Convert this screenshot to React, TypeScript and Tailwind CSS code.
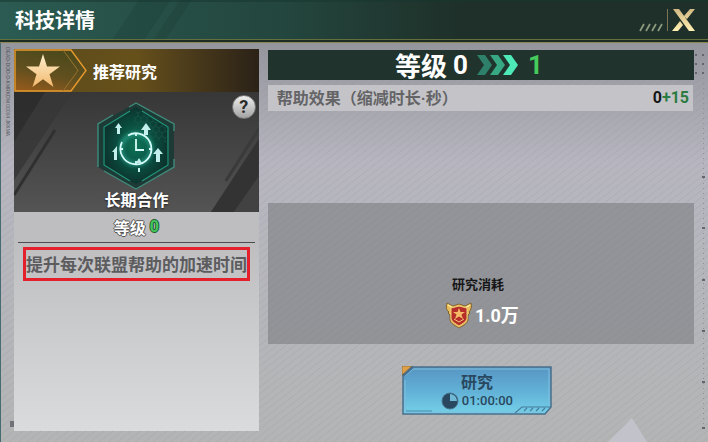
const chevrons = ["#2f806a", "#38a884", "#4deab8"];

function StarBadge() {
  return (
    <svg className="w-[74px] h-[43px] shrink-0" viewBox="0 0 74 43">
      <defs>
        <linearGradient id="badge" x1="0" y1="1" x2="0.4" y2="0">
          <stop offset="0" stopColor="#9a5b1b" />
          <stop offset="0.5" stopColor="#63501f" />
          <stop offset="1" stopColor="#4d4a1c" />
        </linearGradient>
        <linearGradient id="star" x1="0" y1="0" x2="0" y2="1">
          <stop offset="0" stopColor="#fff0cf" />
          <stop offset="1" stopColor="#f2b86d" />
        </linearGradient>
      </defs>
      <path d="M1 1H57L72 21.500L57 42H1Z" fill="url(#badge)" stroke="#e79a2c" strokeWidth="1.400" />
      <path d="M49 1L64 21.500L49 42" fill="none" stroke="#96702c" />
      <path d="M53 6L64 21.500L53 37" fill="none" stroke="#8a6a28" strokeWidth="0.700" />
      <path
        d="M29 5L33 17.500H46L35.500 25.200L39.500 38L29 30.200L18.500 38L22.500 25.200L12 17.500H25Z"
        fill="url(#star)"
      />
    </svg>
  );
}

function TechIcon() {
  return (
    <svg className="w-20 h-[90px]" viewBox="0 0 80 90">
      <defs>
        <radialGradient id="hex">
          <stop offset="0" stopColor="#0e7558" />
          <stop offset="0.600" stopColor="#0a4c3f" />
          <stop offset="1" stopColor="#0c332e" />
        </radialGradient>
        <pattern id="cells" width="6" height="10" patternUnits="userSpaceOnUse">
          <path d="M3 0L6 2V5L3 7L0 5V2ZM3 7V10" fill="none" stroke="#1b5a4b" strokeWidth="0.600" />
        </pattern>
        <filter id="glow" x="-20%" y="-20%" width="140%" height="140%">
          <feGaussianBlur stdDeviation="2" />
        </filter>
      </defs>
      <path d="M40 2L78 23V66L40 88L2 66V23Z" fill="#1d3a36" />
      <path d="M40 6L73 26V64L40 83L7 64V26Z" fill="url(#hex)" />
      <path d="M40 8L71 26V42L36 30Z" fill="url(#cells)" />
      <path d="M33 6L40 2L78 23V30M78 58V66L40 88L8 70M2 66V23L17 14" fill="none" stroke="#3f8a79" strokeWidth="1.400" />
      <path d="M34 10L8 26V64L34 80M46 80L72 64V26L46 10" fill="none" stroke="#23967a" strokeWidth="1.200" />
      <circle cx="40" cy="48" r="15" fill="none" stroke="#3ecbb0" strokeWidth="3" opacity="0.7" filter="url(#glow)" />
      <g fill="none" stroke="#d5fcf8" strokeWidth="1.800">
        <path d="M32 34.500A15.500 15.500 0 1 1 26 41" />
        <path d="M40 38V49H48M40 32V35M53 48H56M24 48H27M40 60V63" />
      </g>
      <g fill="#c3efed">
        <path d="M22.500 22L26 27H24V33H21V27H19Z" />
        <path d="M50 22L55 29H52V34H48V29H45Z" />
        <path d="M21 45V59H18V51H16Z" />
        <path d="M62 47L67 53H64V61H60V53H57Z" />
        <path d="M43 57L46 62H40ZM42 67H44V71H42Z" />
      </g>
    </svg>
  );
}

function MedalIcon() {
  return (
    <svg className="w-7 h-7" viewBox="0 0 28 28">
      <path
        d="M2 2L8 5L14 3L20 5L26 2C27 6 26 9 24 11L25 12L23 14V19C22 23 17 25 14 27C11 25 6 23 5 19V14L3 12L4 11C1 9 1 6 2 2Z"
        fill="#e9bd59"
        stroke="#745222"
        strokeWidth="0.800"
      />
      <path d="M3 4L8 7L7 10M25 4L20 7L21 10" fill="none" stroke="#fff0a8" strokeWidth="1.200" />
      <path d="M14 5L22 7V18C21 21 17 23 14 25C11 23 7 21 6 18V7Z" fill="#b62e29" stroke="#efd07a" />
      <path d="M14 7L15.500 11H20L16.500 13.500L18 18L14 15.500L10 18L11.500 13.500L8 11H12.500Z" fill="#f4ba66" />
      <path d="M9 18L14 21L19 18" fill="none" stroke="#f1c875" />
    </svg>
  );
}

function Header() {
  return (
    <header className="relative h-[43px] shrink-0 flex items-start justify-between pl-[15px] pr-3 bg-gradient-to-r from-[#2b5b52] via-[#23463e] via-40% to-[#1e3029] to-65%">
      <svg className="absolute inset-0 w-full h-full" preserveAspectRatio="none" viewBox="0 0 708 43">
        <path d="M139 0H171L145 39H113ZM180 0H192L166 39H154Z" fill="#10251f" opacity="0.15" />
        <path d="M0 1H708" stroke="#16372f" />
        <path d="M0 39.500H708" stroke="#64703c" />
        <path d="M0 41H708" stroke="#1c2d28" strokeWidth="2" />
        <path d="M0 42.500H708" stroke="#8c874f" />
      </svg>
      <h1 className="relative mt-1.5 text-xl leading-7 font-bold text-white">科技详情</h1>
      <div className="relative flex items-center h-10">
        <svg className="w-6 h-10" viewBox="0 0 24 40">
          <path d="M1 31L5 24M7 31L11 24M13 31L17 24M19 31L23 24" stroke="#8b987f" strokeWidth="1.800" />
        </svg>
        <span className="ml-1 w-px h-[22px] bg-[#7c7455]" />
        <button aria-label="关闭" className="ml-1 w-6 h-6 cursor-pointer">
          <svg viewBox="0 0 24 24">
            <defs>
              <linearGradient id="gold" x1="0" y1="0" x2="0" y2="1">
                <stop offset="0" stopColor="#d0b783" />
                <stop offset="1" stopColor="#fff0b2" />
              </linearGradient>
            </defs>
            <path d="M1 1H7L23 23H17ZM18 1H23L15 11L12 8ZM8 13L11 17L6 23H0Z" fill="url(#gold)" />
          </svg>
        </button>
      </div>
    </header>
  );
}

function TechPanel() {
  return (
    <section className="w-[36%] shrink-0 flex flex-col bg-gradient-to-b from-[#bebec0] from-50% to-[#dadbdd]">
      <div className="flex items-center bg-gradient-to-r from-[#5c4b1c] via-[#66501a] to-[#2b2217]">
        <StarBadge />
        <h2 className="ml-[5px] text-base font-bold text-white">推荐研究</h2>
      </div>

      <div className="relative h-[120px] flex flex-col items-center pt-[9px] bg-gradient-to-b from-[#373737] to-[#545455]">
        <svg className="absolute inset-0 w-full h-full" preserveAspectRatio="none" viewBox="0 0 245 120">
          <path d="M0 0H58L0 88Z" fill="#292929" opacity="0.75" />
          <path d="M31 0H58L0 88V50Z" fill="#414141" opacity="0.5" />
          <path d="M41 38L0 103" stroke="#303031" strokeWidth="3" />
          <path d="M245 37L212 89" stroke="#3a3a3b" strokeWidth="3" />
          <path d="M245 47V120H197Z" fill="#333334" />
          <path d="M245 84V120H220Z" fill="#424243" />
        </svg>
        <button
          aria-label="帮助"
          className="absolute right-[3px] top-[3px] w-6 h-6 rounded-full border border-[#777] bg-gradient-to-b from-[#eeeeee] to-[#a3a3a3] font-[Roboto] text-lg leading-5 font-bold text-[#2b2b2b] cursor-pointer"
        >
          ?
        </button>
        <div className="relative">
          <TechIcon />
        </div>
        <h3 className="relative -mt-1 text-base leading-6 font-bold text-white [text-shadow:0_1px_2px_#222]">
          长期合作
        </h3>
      </div>

      <div className="mx-1 h-[31px] flex justify-center items-center gap-1 border-b border-[#4c4c50] text-base font-bold text-white">
        <span className="[text-shadow:1px_0_#555,-1px_0_#555,0_1px_#555,0_-1px_#555]">等级</span>
        <span className="font-[Roboto] text-[#42c65b] [text-shadow:1px_0_#245c30,-1px_0_#245c30,0_1px_#245c30,0_-1px_#245c30]">
          0
        </span>
      </div>

      <p className="mx-[9px] mt-1 border-[3px] border-[#e3202b] text-center text-[17px] leading-7 font-bold text-[#5c5c5f] whitespace-nowrap">
        提升每次联盟帮助的加速时间
      </p>
    </section>
  );
}

function ResearchPanel() {
  return (
    <section className="flex-1 min-w-0 flex flex-col pt-px">
      <div className="h-[30px] pr-6 flex items-center justify-center gap-[9px] bg-[#20332d] text-[26px] leading-[30px] font-bold text-white">
        <span className="flex items-center gap-1.5">
          等级
          <span className="font-[Roboto]">0</span>
        </span>
        <svg className="w-[42px] h-5" viewBox="0 0 42 20">
          {chevrons.map((color, i) => (
            <path key={color} d="M0 0H8L15 10L8 20H0L7 10Z" fill={color} transform={`translate(${i * 13} 0)`} />
          ))}
        </svg>
        <span className="font-[Roboto] text-[#45ca5d]">1</span>
      </div>

      <div className="mt-[5px] mr-px h-[26px] flex items-center justify-between pl-[9px] pr-1 bg-[#c4c4c8]">
        <span className="text-base font-bold text-[#646467]">
          帮助效果（缩减时长<span className="font-[Roboto]">·</span>秒）
        </span>
        <span className="font-[Roboto] text-base font-bold text-[#171719]">
          0<span className="text-[#2c7b42]">+15</span>
        </span>
      </div>

      <div className="mt-[92px] h-[141px] flex flex-col items-center justify-end pb-3 pr-1.5 bg-[#707176]/50">
        <span className="text-[13px] leading-5 font-bold text-[#161617]">研究消耗</span>
        <div className="mt-1 flex items-center pl-2 text-white">
          <MedalIcon />
          <span className="ml-0.5 text-lg leading-8 font-bold">
            <span className="font-[Roboto]">1.0</span>万
          </span>
        </div>
      </div>

      <button className="relative self-center mt-[22px] mr-2 w-[150px] h-[49px] flex flex-col items-center pt-[5px] text-[#294860] cursor-pointer">
        <svg className="absolute inset-0 w-full h-full" viewBox="0 0 150 49">
          <defs>
            <linearGradient id="btn" x1="0" y1="0" x2="0" y2="1">
              <stop offset="0" stopColor="#5795c3" />
              <stop offset="0.500" stopColor="#61b0d6" />
              <stop offset="1" stopColor="#75d1e9" />
            </linearGradient>
          </defs>
          <path d="M1 1H149V41L143 48H1Z" fill="url(#btn)" stroke="#496f8d" strokeWidth="1.500" />
          <path d="M3 10L11 3H147V39M140 46H3V14" fill="none" stroke="#80bedb" />
          <path d="M1 10L11 1" stroke="#446b88" strokeWidth="2" />
          <path d="M0 0H10L0 9Z" fill="#e1a044" stroke="#785d3f" strokeWidth="0.700" />
          <path d="M113 47L120 41H148M122 45L125 42M128 45L131 42M134 45L137 42M140 45L143 42" fill="none" stroke="#467d9c" strokeWidth="1.200" />
          <path d="M4 45H30" stroke="#478bad" />
        </svg>
        <span className="relative text-base leading-5 font-bold">研究</span>
        <span className="relative flex items-center gap-[3px] font-[Roboto] text-[13px] leading-5 font-medium">
          <svg className="w-[18px] h-[18px]" viewBox="0 0 18 18">
            <circle cx="9" cy="9" r="8" fill="#294860" stroke="#47738e" />
            <path d="M9 9V2A7 7 0 0 1 16 9Z" fill="#70b9d6" />
          </svg>
          01:00:00
        </span>
      </button>
    </section>
  );
}

function Backdrop() {
  return (
    <svg className="absolute inset-0 w-full h-full" preserveAspectRatio="none" viewBox="0 0 708 399">
      <defs>
        <pattern id="lines" width="9" height="7" patternUnits="userSpaceOnUse">
          <path d="M-1 8L10 -1" stroke="#8d8e96" strokeWidth="0.800" opacity="0.3" />
        </pattern>
      </defs>
      <rect width="708" height="399" fill="url(#lines)" />
      <path d="M632 375L608 399H647Z" fill="#c2c2ca" />
      <path d="M703.500 20V390" stroke="#8d8e96" strokeDasharray="1 4" />
      <path d="M702 134H705M702 185H705M702 237H705M702 288H705M702 339H705M702 385H705" stroke="#65666d" strokeWidth="2" />
      <g fill="#65666d">
        {[12, 21, 30].map((y) => (
          <path key={y} d={`M695 ${y - 1}h2v2h-2ZM702 ${y - 1}h2v2h-2Z`} />
        ))}
      </g>
      <path d="M10 378H14V384H10Z" fill="#707277" />
      <path d="M0.500 0V399" stroke="#466b70" />
    </svg>
  );
}

export default function App() {
  return (
    <div className="min-h-screen flex flex-col font-['Noto_Sans_CJK_SC',sans-serif] bg-[#aeb2b4]">
      <Header />
      <main className="relative flex-1 flex bg-gradient-to-b from-[#94959d] via-[#b7b6c0] via-30% to-[#b3b5b5]">
        <Backdrop />
        <span className="absolute left-[5px] top-1 [writing-mode:vertical-rl] font-['Liberation_Sans'] text-[5px] leading-[6px] text-[#55575d]">
          DEAD-DOD-D-KMRKDM 00004 JKKMA
        </span>
        <div className="relative flex-1 flex gap-[9px] px-3.5 pt-1.5 pb-[11px]">
          <TechPanel />
          <ResearchPanel />
        </div>
      </main>
    </div>
  );
}
